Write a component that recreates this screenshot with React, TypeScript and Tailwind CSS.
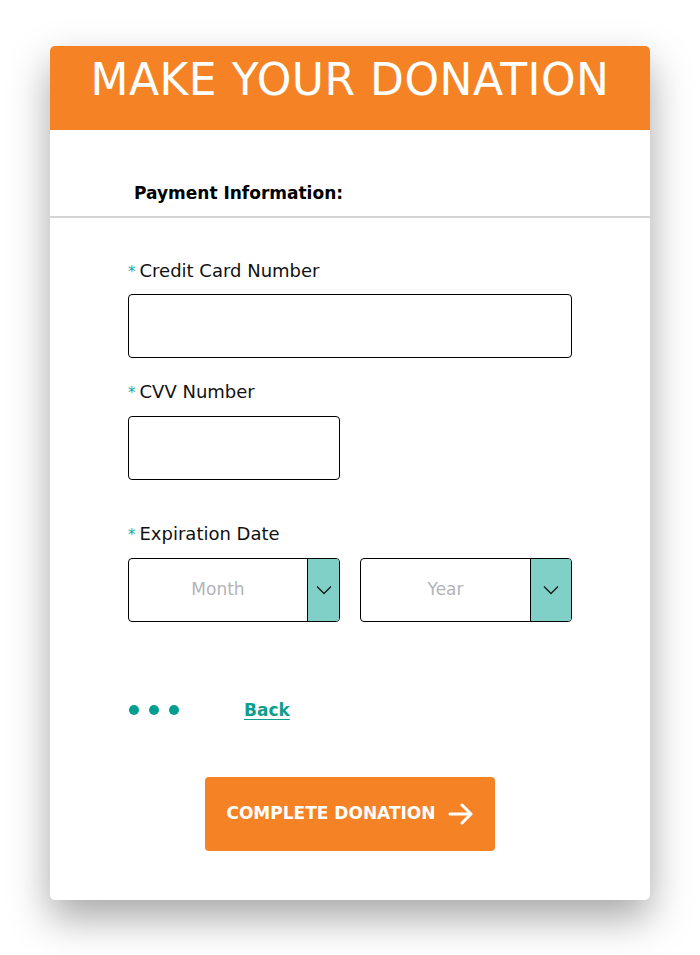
import React from "react";

function Label({ text }: { text: string }) {
  return (
    <div className="flex items-baseline text-[18px] text-[#111] leading-none h-[18px]">
      <span className="text-[#13a89e] text-[15px] mr-[4px]">*</span>
      {text}
    </div>
  );
}

function Chevron() {
  return (
    <svg width="16" height="10" viewBox="0 0 16 10" fill="none">
      <path d="M1 1.5 L8 8.5 L15 1.5" stroke="#1a1a1a" strokeWidth="1.3" />
    </svg>
  );
}

function SelectBox({ placeholder, btnWidth }: { placeholder: string; btnWidth: string }) {
  return (
    <div className="flex h-[64px] border border-black rounded-[4px] overflow-hidden">
      <div className="flex-1 flex items-center justify-center text-[17px] text-[#b3b3b8]">
        {placeholder}
      </div>
      <div className={`${btnWidth} border-l border-black bg-[#80d0c7] flex items-center justify-center`}>
        <Chevron />
      </div>
    </div>
  );
}

export default function App() {
  return (
    <div
      className="min-h-[955px] bg-white flex justify-center pt-[46px]"
      style={{ fontFamily: '"DejaVu Sans", "Open Sans", sans-serif' }}
    >
      <div className="w-[600px] h-[854px] bg-white rounded-[5px] overflow-hidden shadow-[0_18px_40px_rgba(0,0,0,0.35)]">
        {/* Header */}
        <div className="h-[84px] bg-[#f58325] flex items-center justify-center pb-[16px]">
          <h1 className="text-white text-[44px] font-normal tracking-[0.5px] leading-none">
            MAKE YOUR DONATION
          </h1>
        </div>

        {/* Section title */}
        <div className="h-[88px] border-b-2 border-[#d4d4d6] flex items-end pb-[10px] pl-[84px]">
          <span className="text-[17px] font-bold text-black">Payment Information:</span>
        </div>

        {/* Form */}
        <div className="px-[78px] pt-[44px]">
          <Label text="Credit Card Number" />
          <div className="mt-[14px] h-[64px] border border-black rounded-[4px]" />

          <div className="mt-[25px]">
            <Label text="CVV Number" />
          </div>
          <div className="mt-[15px] w-[212px] h-[64px] border border-black rounded-[4px]" />

          <div className="mt-[45px]">
            <Label text="Expiration Date" />
          </div>
          <div className="mt-[15px] grid grid-cols-2 gap-[20px]">
            <SelectBox placeholder="Month" btnWidth="w-[32px]" />
            <SelectBox placeholder="Year" btnWidth="w-[41px]" />
          </div>

          <div className="mt-[79px] h-[18px] flex items-center">
            <div className="flex gap-[10px] pl-[1px]">
              <span className="w-[10px] h-[10px] rounded-full bg-[#009e8e]" />
              <span className="w-[10px] h-[10px] rounded-full bg-[#009e8e]" />
              <span className="w-[10px] h-[10px] rounded-full bg-[#009e8e]" />
            </div>
            <a className="ml-[65px] text-[17px] leading-none font-bold text-[#0f9e8e] underline underline-offset-[3px]">
              Back
            </a>
          </div>

          <div className="mt-[58px] flex justify-center">
            <button className="w-[290px] h-[74px] bg-[#f58325] rounded-[4px] flex items-center justify-center gap-[12px] text-white text-[17px] font-bold">
              COMPLETE DONATION
              <svg width="26" height="22" viewBox="0 0 26 22" fill="none">
                <path d="M2 11 H23 M14 2 L23 11 L14 20" stroke="white" strokeWidth="3" strokeLinecap="round" strokeLinejoin="round" />
              </svg>
            </button>
          </div>
        </div>
      </div>
    </div>
  );
}
